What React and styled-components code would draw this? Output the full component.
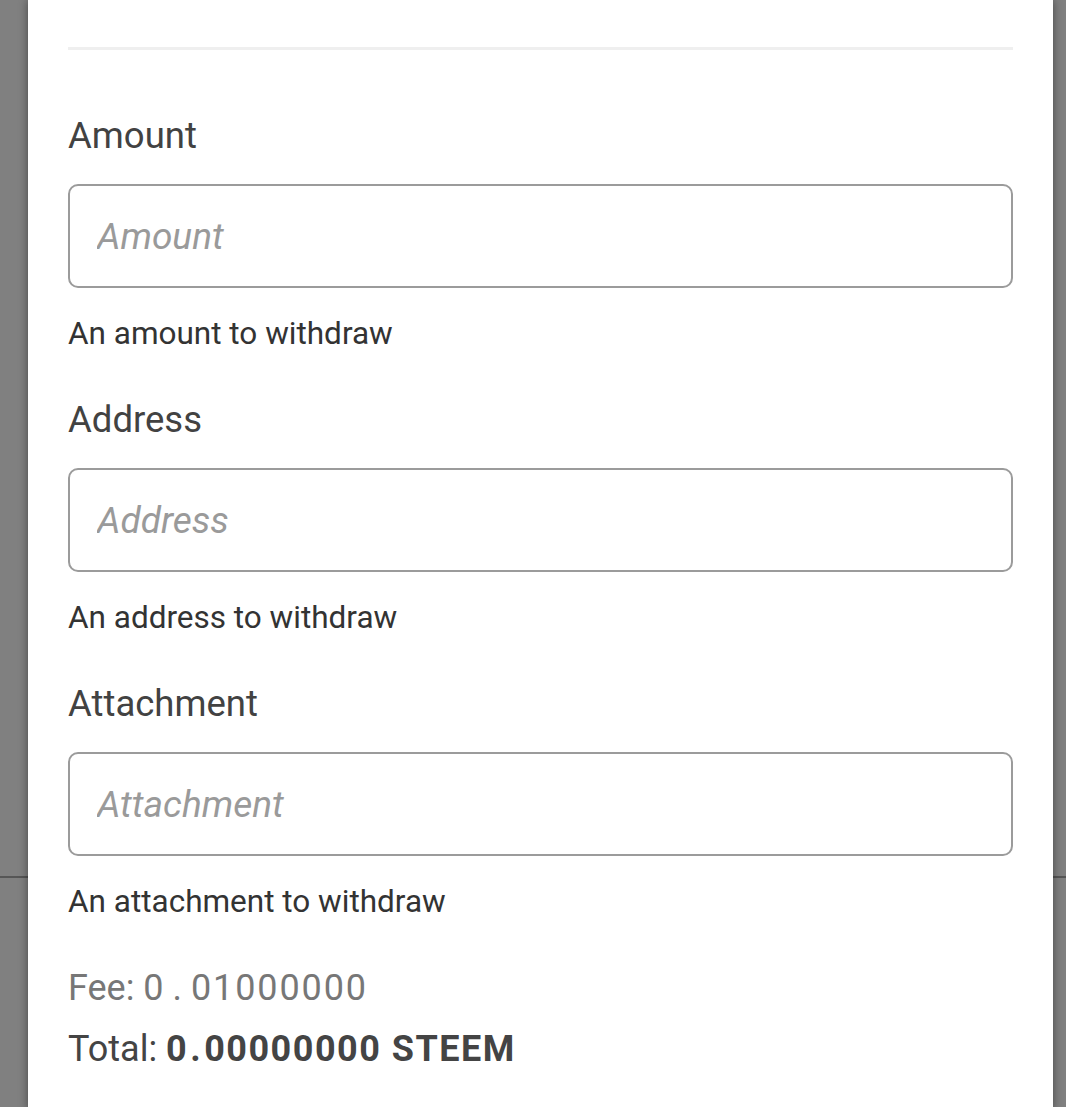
import React from 'react';
import styled, { createGlobalStyle } from 'styled-components';

const GlobalStyle = createGlobalStyle`
  html, body {
    margin: 0;
    padding: 0;
    background: #808080;
  }
  body {
    font-family: Roboto, "Noto Sans", "Liberation Sans", sans-serif;
    -webkit-font-smoothing: antialiased;
  }
`;

// backdrop with the page behind it (footer border shows through at 876px)
const Backdrop = styled.div`
  min-height: 1107px;
  padding: 0 13px 0 28px;
  box-sizing: border-box;
  background:
    linear-gradient(to bottom, transparent 876px, #565656 876px, #565656 878px, transparent 878px),
    #808080;
  overflow: hidden;
`;

const Modal = styled.div`
  background: #fff;
  min-height: 1107px;
  padding: 47px 40px 40px;
  box-sizing: border-box;
  box-shadow: 0 0 9px rgba(0, 0, 0, 0.45);
`;

const Divider = styled.hr`
  margin: 0;
  border: none;
  height: 3px;
  background: #efefef;
`;

const Form = styled.div`
  padding-top: 65px;
`;

const Field = styled.div`
  display: flex;
  flex-direction: column;
  margin-bottom: 47px;
`;

const Label = styled.label`
  font-size: 36.5px;
  line-height: 42px;
  color: #424242;
  margin-bottom: 27px;
`;

const Input = styled.input`
  box-sizing: border-box;
  width: 100%;
  height: 104px;
  border: 2px solid #9b9b9b;
  border-radius: 10px;
  padding: 0 27px;
  font-family: Roboto, "Noto Sans", sans-serif;
  font-size: 37px;
  color: #333;
  background: #fff;
  outline: none;

  &::placeholder {
    color: #9a9a9a;
    font-style: italic;
  }
`;

const Help = styled.small`
  display: block;
  font-size: 31.5px;
  line-height: 37px;
  color: #333;
  margin-top: 27px;
`;

const SummaryLine = styled.div`
  font-size: 36px;
  line-height: 42px;
  color: ${p => (p.muted ? '#777' : '#444')};
  margin-bottom: ${p => (p.muted ? '19px' : '0')};
`;

const Amount = styled.span`
  letter-spacing: ${p => (p.bold ? '1.5px' : '1.9px')};
  font-weight: ${p => (p.bold ? 700 : 400)};
`;

const Dot = styled.span`
  margin: 0 ${p => (p.bold ? '2px' : '7px')};
`;

const fields = [
  { name: 'amount', label: 'Amount', help: 'An amount to withdraw' },
  { name: 'address', label: 'Address', help: 'An address to withdraw' },
  { name: 'attachment', label: 'Attachment', help: 'An attachment to withdraw' },
];

const Num = ({ whole, frac, bold, suffix }) => (
  <Amount bold={bold}>
    {whole}
    <Dot bold={bold}>.</Dot>
    {frac}
    {suffix}
  </Amount>
);

export default function App() {
  return (
    <>
      <GlobalStyle />
      <Backdrop>
        <Modal>
          <Divider />
          <Form>
            {fields.map(f => (
              <Field key={f.name}>
                <Label htmlFor={f.name}>{f.label}</Label>
                <Input id={f.name} placeholder={f.label} />
                <Help>{f.help}</Help>
              </Field>
            ))}
            <SummaryLine muted>
              Fee:&nbsp;<Num whole="0" frac="01000000" />
            </SummaryLine>
            <SummaryLine>
              Total: <Num whole="0" frac="00000000" suffix=" STEEM" bold />
            </SummaryLine>
          </Form>
        </Modal>
      </Backdrop>
    </>
  );
}
